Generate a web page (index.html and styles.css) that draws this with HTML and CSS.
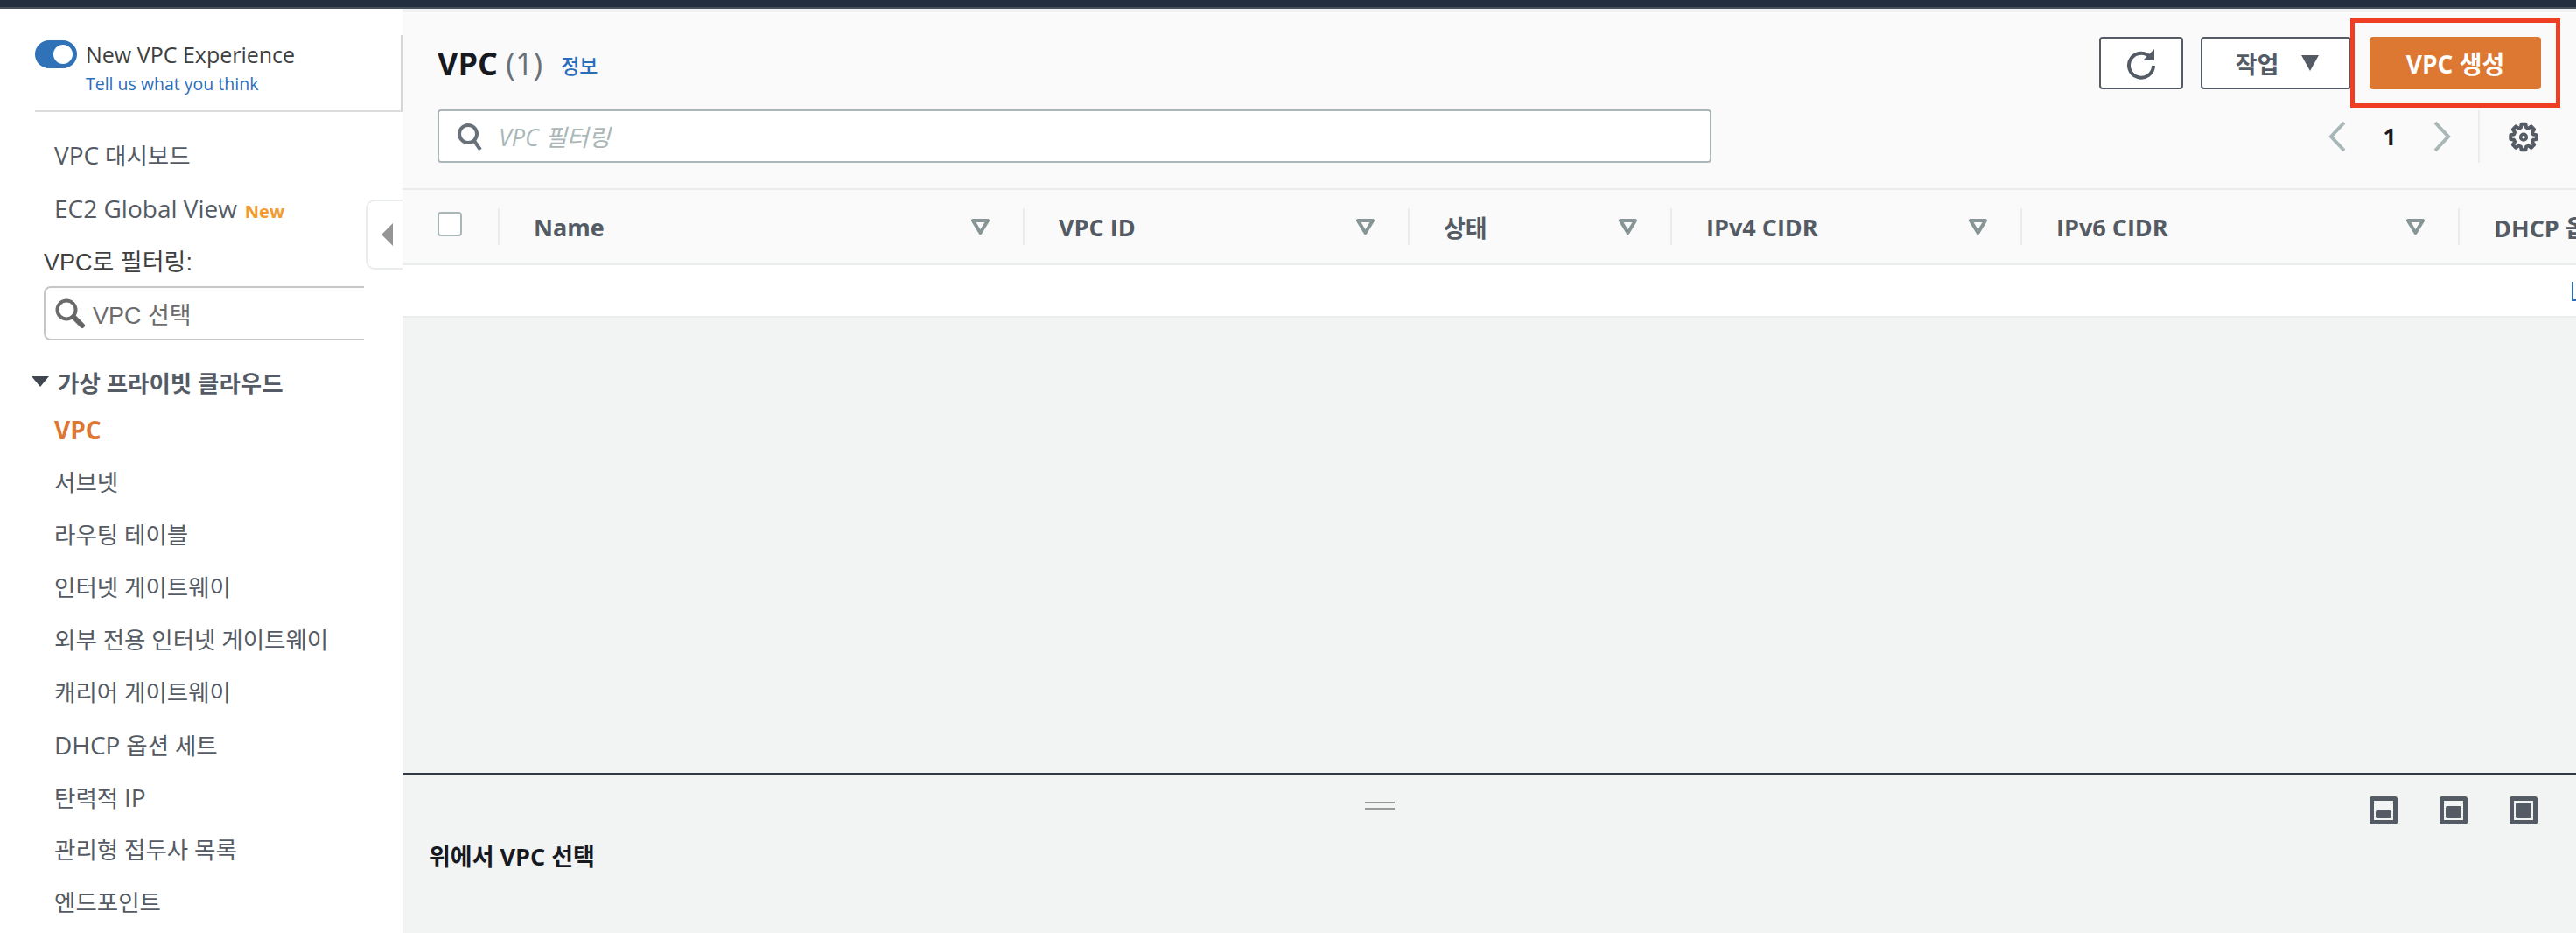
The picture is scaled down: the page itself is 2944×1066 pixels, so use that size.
FILE: index.html
```html
<!DOCTYPE html>
<html lang="ko">
<head>
  <meta charset="UTF-8" />
  <title>VPC</title>
  <link rel="stylesheet" href="styles.css">
</head>
<body>
  <div class="topbar"></div>
  <div class="layout">
    <aside class="sidebar">
      <div class="experience">
        <span class="toggle"><span class="knob"></span></span>
        <div>
          <div class="exp-title">New VPC Experience</div>
          <a class="exp-link">Tell us what you think</a>
        </div>
      </div>
      <nav class="top-links">
        <a class="nav-item"><span class="en">VPC</span> 대시보드</a>
        <a class="nav-item"><span class="en">EC2 Global View</span> <span class="new">New</span></a>
      </nav>
      <div class="filter-label">VPC로 필터링:</div>
      <div class="vpc-select">
        <svg class="lens" width="36" height="36" viewBox="0 0 36 36"><circle cx="14" cy="14" r="10.5" fill="#fff" stroke="#6b6b6b" stroke-width="4"/><path d="M22 22l10 10" stroke="#666" stroke-width="6" stroke-linecap="round"/></svg>
        <span>VPC 선택</span>
      </div>
      <div class="section-head">
        <svg width="20" height="12" viewBox="0 0 20 12"><path d="M0 0h20l-10 12z" fill="#414750"/></svg>
        <span>가상 프라이빗 클라우드</span>
      </div>
      <nav>
        <a class="nav-item active"><span class="en">VPC</span></a>
        <a class="nav-item">서브넷</a>
        <a class="nav-item">라우팅 테이블</a>
        <a class="nav-item">인터넷 게이트웨이</a>
        <a class="nav-item">외부 전용 인터넷 게이트웨이</a>
        <a class="nav-item">캐리어 게이트웨이</a>
        <a class="nav-item"><span class="en">DHCP</span> 옵션 세트</a>
        <a class="nav-item">탄력적 <span class="en">IP</span></a>
        <a class="nav-item">관리형 접두사 목록</a>
        <a class="nav-item">엔드포인트</a>
      </nav>
    </aside>

    <div class="collapse-handle">
      <svg width="14" height="26" viewBox="0 0 14 26"><path d="M13 0v26L0 13z" fill="#959595"/></svg>
    </div>

    <main class="main">
      <header class="panel-head">
        <div class="head-left">
          <div class="title-row">
            <h1>VPC <span class="count">(1)</span></h1>
            <a class="info">정보</a>
          </div>
          <div class="filter-input">
            <svg width="30" height="32" viewBox="0 0 30 32"><circle cx="13" cy="13" r="10" fill="none" stroke="#687078" stroke-width="4"/><path d="M20 21l7 10" stroke="#687078" stroke-width="4"/></svg>
            <span>VPC 필터링</span>
          </div>
        </div>
        <div class="head-right">
          <div class="actions">
            <button class="btn btn-icon">
              <svg width="34" height="38" viewBox="0 0 34 38"><path d="M28 13A14 14 0 1 0 31 22" fill="none" stroke="#545b64" stroke-width="4"/><path d="M32 3v13H19z" fill="#545b64"/></svg>
            </button>
            <button class="btn btn-actions">작업 <svg width="20" height="18" viewBox="0 0 20 18"><path d="M0 0h20L10 18z" fill="#545b64"/></svg></button>
            <div class="highlight"><button class="btn btn-primary">VPC 생성</button></div>
          </div>
          <div class="pager">
            <svg width="20" height="36" viewBox="0 0 20 36"><path d="M18 2L3 18l15 16" fill="none" stroke="#aab7b8" stroke-width="4"/></svg>
            <span class="page-no">1</span>
            <svg width="20" height="36" viewBox="0 0 20 36"><path d="M2 2l15 16L2 34" fill="none" stroke="#aab7b8" stroke-width="4"/></svg>
            <span class="pager-sep"></span>
            <svg class="gear" width="34" height="36" viewBox="0 0 24 24"><path d="M10.3 2h3.4l.5 2.7 1.7.7 2.3-1.6 2.4 2.4-1.6 2.3.7 1.7 2.7.5v3.4l-2.7.5-.7 1.7 1.6 2.3-2.4 2.400-2.3-1.600-1.700.7-.5 2.700h-3.400l-.5-2.700-1.700-.7-2.300 1.600-2.400-2.400 1.600-2.300-.7-1.700-2.700-.5v-3.400l2.700-.5.7-1.700-1.600-2.300 2.400-2.400 2.300 1.600 1.700-.7z" fill="none" stroke="#545b64" stroke-width="2.800" stroke-linejoin="round"/><circle cx="12" cy="12.500" r="2.400" fill="none" stroke="#545b64" stroke-width="2.400"/></svg>
          </div>
        </div>
      </header>

      <div class="table-head">
        <div class="cell-check"><span class="checkbox"></span></div>
        <div class="col col-name"><span>Name</span><svg class="sort" width="21" height="18" viewBox="0 0 21 18"><path d="M2 2h17l-8.500 14z" fill="none" stroke="#879596" stroke-width="4" stroke-linejoin="round"/></svg></div>
        <div class="col col-id"><span>VPC ID</span><svg class="sort" width="21" height="18" viewBox="0 0 21 18"><path d="M2 2h17l-8.500 14z" fill="none" stroke="#879596" stroke-width="4" stroke-linejoin="round"/></svg></div>
        <div class="col col-state"><span>상태</span><svg class="sort" width="21" height="18" viewBox="0 0 21 18"><path d="M2 2h17l-8.500 14z" fill="none" stroke="#879596" stroke-width="4" stroke-linejoin="round"/></svg></div>
        <div class="col col-v4"><span>IPv4 CIDR</span><svg class="sort" width="21" height="18" viewBox="0 0 21 18"><path d="M2 2h17l-8.500 14z" fill="none" stroke="#879596" stroke-width="4" stroke-linejoin="round"/></svg></div>
        <div class="col col-v6"><span>IPv6 CIDR</span><svg class="sort" width="21" height="18" viewBox="0 0 21 18"><path d="M2 2h17l-8.500 14z" fill="none" stroke="#879596" stroke-width="4" stroke-linejoin="round"/></svg></div>
        <div class="col col-dhcp"><span>DHCP 옵션 세트</span></div>
      </div>
      <div class="table-row"><a class="cut-link"></a></div>

      <div class="spacer"></div>

      <section class="split">
        <div class="split-bar">
          <span class="grip"></span>
          <div class="split-icons">
            <span class="pane-icon"><i class="fill-s"></i></span>
            <span class="pane-icon"><i class="fill-m"></i></span>
            <span class="pane-icon"><i class="fill-l"></i></span>
          </div>
        </div>
        <div class="split-text">위에서 VPC 선택</div>
      </section>
    </main>
  </div>
</body>
</html>
```

FILE: styles.css
```css
* {
  box-sizing: border-box;
}
html, body {
  height: 100%;
}
body {
  margin: 0;
  overflow: hidden;
  font-family: "Open Sans", "Noto Sans CJK KR", sans-serif;
  color: #545b64;
  background: #f2f3f3;
}
.topbar {
  height: 10px;
  background: #232f3e;
  border-bottom: 2px solid #47505b;
}
.layout {
  position: relative;
  display: flex;
  height: 1056px;
}

/* sidebar */
.sidebar {
  width: 460px;
  flex: none;
  background: #fff;
  overflow: hidden;
}
.experience {
  display: flex;
  gap: 10px;
  height: 88px;
  margin: 30px 0 0 40px;
  padding-top: 6px;
  border-right: 2px solid #d5d5d5;
  border-bottom: 2px solid #dcdcdc;
}
.toggle {
  position: relative;
  width: 48px;
  height: 32px;
  flex: none;
  background: #2f72b8;
  border-radius: 16px;
}
.knob {
  position: absolute;
  top: 5px;
  right: 5px;
  width: 22px;
  height: 22px;
  background: #fff;
  border-radius: 50%;
}
.exp-title {
  font-size: 25px;
  line-height: 32px;
  color: #3f3f3f;
}
.exp-link {
  display: block;
  margin-top: 4px;
  font-size: 19.500px;
  line-height: 28px;
  color: #2a6ebb;
}
.top-links {
  padding-top: 19px;
}
.nav-item {
  display: block;
  height: 60px;
  padding-left: 62px;
  font-size: 26.500px;
  line-height: 60px;
  color: #545b64;
  white-space: nowrap;
}
.en {
  font-size: 28px;
}
.top-links .nav-item + .nav-item {
  margin-top: 1px;
}
.nav-item.active {
  font-weight: 700;
  color: #dd7832;
}
.new {
  margin-left: 2px;
  font-size: 20px;
  font-weight: 700;
  color: #f39b2f;
}
.filter-label {
  margin: 2px 0 0 50px;
  font-family: "Liberation Sans", "Noto Sans CJK KR", sans-serif;
  font-size: 27px;
  line-height: 60px;
  color: #3f3f3f;
}
.vpc-select {
  display: flex;
  align-items: center;
  gap: 8px;
  width: 366px;
  height: 62px;
  margin: -3px 0 0 50px;
  padding-left: 10px;
  border: 2px solid #c6c6c6;
  border-right: none;
  border-radius: 8px 0 0 8px;
  font-family: "Liberation Sans", "Noto Sans CJK KR", sans-serif;
  font-size: 27px;
  color: #6c6c6c;
}
.section-head {
  display: flex;
  align-items: center;
  gap: 10px;
  height: 40px;
  margin-top: 27px;
  padding-left: 36px;
  font-size: 26.500px;
  font-weight: 700;
  color: #545b64;
}
.section-head + nav {
  padding-top: 5px;
}
.collapse-handle {
  position: absolute;
  top: 218px;
  left: 418px;
  display: flex;
  align-items: center;
  padding-left: 16px;
  width: 42px;
  height: 80px;
  background: #fff;
  border: 2px solid #eaeded;
  border-right: none;
  border-radius: 10px 0 0 10px;
}

/* main panel */
.main {
  flex: 1;
  min-width: 0;
  display: flex;
  flex-direction: column;
  overflow: hidden;
}
.panel-head {
  display: flex;
  justify-content: space-between;
  height: 203px;
  margin-top: 4px;
  background: #fafafa;
  border-bottom: 2px solid #eaeded;
}
.head-left {
  padding: 31px 0 0 40px;
}
.title-row {
  display: flex;
  align-items: center;
  gap: 20px;
  height: 54px;
}
h1 {
  margin: 0;
  font-size: 36px;
  font-weight: 700;
  color: #16191f;
}
.count {
  font-weight: 400;
  color: #687078;
}
.info {
  margin: 4px 0 0 1px;
  font-size: 23px;
  font-weight: 500;
  color: #2a6ebb;
}
.filter-input {
  display: flex;
  align-items: center;
  gap: 18px;
  width: 1456px;
  height: 61px;
  margin-top: 26px;
  padding-left: 20px;
  background: #fff;
  border: 2px solid #aab7b8;
  border-radius: 4px;
  font-size: 27px;
  font-style: italic;
  color: #aab7b8;
}
.head-right {
  display: flex;
  flex-direction: column;
  align-items: flex-end;
}
.actions {
  display: flex;
  align-items: center;
  margin: 7px 18px 0 0;
}
.btn {
  height: 60px;
  padding: 0;
  font-family: inherit;
  font-size: 27px;
  font-weight: 700;
  color: #545b64;
  background: #fff;
  border: 2px solid #545b64;
  border-radius: 4px;
}
.btn-icon {
  display: flex;
  align-items: center;
  justify-content: center;
  width: 96px;
  margin-right: 20px;
}
.btn-actions {
  display: flex;
  align-items: center;
  justify-content: center;
  gap: 26px;
  width: 172px;
  padding-left: 3px;
  margin-right: -1px;
}
.highlight {
  padding: 16px 17px;
  border: 5px solid #ee3f24;
}
.btn-primary {
  display: block;
  width: 196px;
  font-size: 28px;
  color: #fff;
  background: #dd7832;
  border: none;
}
.pager {
  display: flex;
  align-items: center;
  width: 281px;
  height: 60px;
  margin: 2px 2px 0 0;
  padding-top: 2px;
}
.page-no {
  width: 100px;
  text-align: center;
  font-size: 26px;
  font-weight: 700;
  color: #16191f;
}
.pager-sep {
  width: 2px;
  height: 60px;
  margin: 0 33px 0 31px;
  background: #eaeded;
}

/* table */
.table-head {
  display: flex;
  align-items: center;
  height: 84px;
  background: #fafafa;
  white-space: nowrap;
}
.cell-check {
  width: 109px;
  flex: none;
  padding-left: 40px;
}
.checkbox {
  display: block;
  width: 28px;
  height: 28px;
  margin-top: -6px;
  background: #fff;
  border: 2px solid #aab7b8;
  border-radius: 4px;
}
.col {
  display: flex;
  align-items: center;
  justify-content: space-between;
  height: 42px;
  flex: none;
  padding: 0 38px 0 39px;
  border-left: 2px solid #eaeded;
  font-size: 27px;
  font-weight: 700;
  color: #545b64;
}
.col-name { width: 600px; }
.col-id { width: 440px; }
.col-state { width: 300px; }
.col-v4 { width: 400px; }
.col-v6 { width: 500px; }
.col-dhcp { width: 300px; }
.table-row {
  position: relative;
  height: 62px;
  background: #fff;
  border-top: 2px solid #eaeded;
  border-bottom: 2px solid #eaeded;
}
.cut-link {
  position: absolute;
  top: 19px;
  right: 0;
  width: 5px;
  height: 22px;
  border: 2px solid #2a6ebb;
  border-width: 0 0 2px 2px;
}
.spacer {
  flex: 1;
}

/* split panel */
.split {
  height: 183px;
  border-top: 2px solid #2f3c48;
  background: #f2f3f3;
}
.split-bar {
  position: relative;
  display: flex;
  justify-content: center;
  padding: 31px 250px 0 0;
}
.grip {
  display: block;
  width: 34px;
  height: 9px;
  border-top: 2px solid #999;
  border-bottom: 2px solid #999;
}
.split-icons {
  position: absolute;
  top: 25px;
  right: 44px;
  display: flex;
  gap: 48px;
}
.pane-icon {
  position: relative;
  display: block;
  width: 32px;
  height: 32px;
  border: 5px solid #545b64;
  border-radius: 3px;
}
.pane-icon i {
  position: absolute;
  left: 2px;
  right: 2px;
  bottom: 2px;
  background: #545b64;
  border-radius: 2px;
}
.fill-s { height: 9px; }
.fill-m { height: 14px; }
.fill-l { height: 18px; }
.split-text {
  margin: 33px 0 0 30px;
  font-size: 27px;
  font-weight: 700;
  color: #16191f;
}
```
